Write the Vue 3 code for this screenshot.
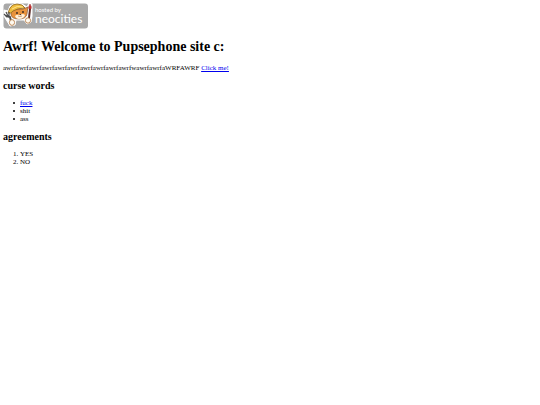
<script setup>
const curseWords = [
  { text: 'fuck', href: '#' },
  { text: 'shit' },
  { text: 'ass' },
]

const agreements = ['YES', 'NO']
</script>

<template>
  <main class="page">
    <a class="hosted" href="#" aria-label="Hosted by Neocities">
      <svg class="hosted__badge" viewBox="0 0 85 26" role="img" aria-hidden="true">
        <rect x="0.500" y="0.500" width="84.500" height="25" rx="3" fill="#a9a9a9" />
        <!-- white sticker outline -->
        <path
          d="M1 7 L5 8 L7 3 L12 0.500 L19 1 L24 4 L26 0 L29 1 L29 13 L28 19 L24 21 L21 17 L13 17 L12 22 L7 23 L1 13 Z"
          fill="#fff"
          stroke="#fff"
          stroke-linejoin="round"
        />
        <!-- cat -->
        <path d="M8 8 L8 12 Q9 16 16 16 Q23 16 24 11 L25 4 L20 6 L11 6 Z" fill="#e8923d" stroke="#70452a" stroke-width=".6" />
        <path d="M12 13 Q14 11 17 12 Q20 10 22 12 Q21 16 16 16 Q13 16 12 13" fill="#fff1dc" />
        <path d="M5 10 Q6 7 7 5 Q9 1 14 1 Q20 1 22 5 Q15 5 10 8 Q8 11 5 10 Z" fill="#efbd3f" stroke="#8b6422" stroke-width=".8" />
        <path d="M9 6 Q14 2 20 4" fill="none" stroke="#ffe48a" />
        <g fill="#30231f">
          <circle cx="14" cy="10" r=".9" />
          <circle cx="20" cy="9" r=".9" />
          <path d="M16.500 11 h1.800 l-.9 1.200 z" />
        </g>
        <path d="M15 13 Q17 14 19 13" fill="none" stroke="#8a5133" stroke-width=".5" />
        <!-- fork -->
        <path d="M1 11 L4 14 M3 9 L5 13 M6 9 L6 14" fill="none" stroke="#4c4c4c" stroke-width="1.200" />
        <path d="M3 13 L7 14 L8 18" fill="none" stroke="#4c4c4c" stroke-width="2" />
        <!-- brush -->
        <path d="M27 6 L26 15" stroke="#5b2a26" stroke-width="2" />
        <path d="M26 6 Q25 4 27 1 Q29 4 28 6 Z" fill="#d03434" stroke="#8f2525" stroke-width=".5" />
        <!-- paws -->
        <ellipse cx="9" cy="19.500" rx="2.600" ry="2.900" fill="#fffaf0" stroke="#b0713a" stroke-width=".8" />
        <ellipse cx="25" cy="17.500" rx="2.600" ry="2.700" fill="#fffaf0" stroke="#b0713a" stroke-width=".8" />
        <text class="hosted__small" x="32" y="9">hosted by</text>
        <text class="hosted__name" x="32" y="20">neocities</text>
      </svg>
    </a>

    <h1>Awrf! Welcome to Pupsephone site c:</h1>
    <p>
      awrfawrfawrfawrfawrfawrfawrfawrfawrfawrfwawrfawrfaWRFAWRF
      <a href="#">Click me!</a>
    </p>

    <h2>curse words</h2>
    <ul>
      <li v-for="word in curseWords" :key="word.text">
        <a v-if="word.href" :href="word.href">{{ word.text }}</a>
        <template v-else>{{ word.text }}</template>
      </li>
    </ul>

    <h2>agreements</h2>
    <ol>
      <li v-for="item in agreements" :key="item">{{ item }}</li>
    </ol>
  </main>
</template>

<style>
body {
  margin: 0;
  background: #fff;
}
</style>

<style scoped>
.page {
  padding: 3px;
  color: #000;
  font-family: "Liberation Serif", "Times New Roman", serif;
  font-size: 7px;
  line-height: 8px;
}

.hosted {
  display: block;
  width: 85px;
}

.hosted__badge {
  display: block;
  width: 85px;
  height: 26px;
}

.hosted__small,
.hosted__name {
  fill: #fff;
  font-family: Lato, "Open Sans", sans-serif;
}

.hosted__small {
  font-size: 6px;
}

.hosted__name {
  font-size: 12px;
}

h1 {
  margin: 10px 0 9px;
  font-size: 14px;
  line-height: 16px;
}

p {
  margin: 0 0 8px;
}

h2 {
  margin: 8px 0 7px;
  font-size: 10px;
  line-height: 12px;
}

ul,
ol {
  margin: 0;
  padding-left: 17px;
}

ul {
  list-style: none;
}

ul li {
  position: relative;
}

ul li::before {
  content: "";
  position: absolute;
  top: 3px;
  left: -7px;
  width: 2px;
  height: 2px;
  border-radius: 50%;
  background: #000;
}

a {
  color: #0000ee;
}
</style>
